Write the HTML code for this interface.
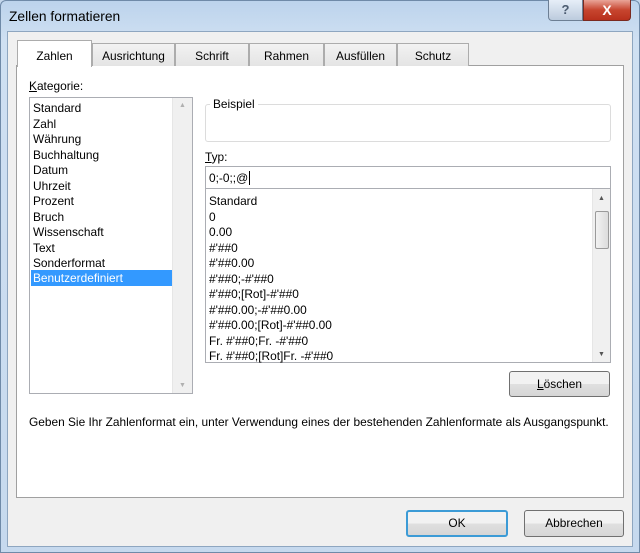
<!DOCTYPE html>
<html><head><meta charset="utf-8"><style>
*{box-sizing:border-box;margin:0;padding:0}
body{width:640px;height:553px;overflow:hidden;background:#c4d7ec;font-family:"Liberation Sans",sans-serif;font-size:11.9px;color:#000;position:relative}
.a{position:absolute}
.frame{left:0;top:0;width:640px;height:553px;background:linear-gradient(#bcd3ec,#cfe0f2 40px,#c6d9ee);border:1px solid #6f8aa8;border-radius:6px 6px 0 0}
.client{left:7px;top:31px;width:626px;height:516px;background:#f0f0f0;border:1px solid #8ea6c0}
.pane{left:16px;top:65px;width:608px;height:433px;background:#fff;border:1px solid #a0a0a0}
.tab{top:43px;height:23px;border:1px solid #acacac;border-bottom:none;background:linear-gradient(#f2f2f2,#e4e4e4);text-align:center;line-height:24px}
.box{background:#fff;border:1px solid #abadb3}
.btn{border:1px solid #707070;border-radius:3px;background:linear-gradient(#f2f2f2 50%,#e0e0e0 50%,#d6d6d6);text-align:center;line-height:24px}
.li{position:absolute;left:3px;white-space:nowrap}
.sb{background:#f0f0f0;border-left:1px solid #e6e6e6}
</style></head><body>
<div class="a frame"></div>
<div class="a" style="left:9px;top:9px;font-size:13.8px;color:#000">Zellen formatieren</div>
<div class="a" style="left:548px;top:0;width:35px;height:21px;border:1px solid #6d7f94;border-top:none;border-radius:0 0 0 4px;background:linear-gradient(#e6eef8,#bccbdd);text-align:center;font-weight:bold;color:#4b5b70;font-size:13px;line-height:20px">?</div>
<div class="a" style="left:583px;top:0;width:48px;height:21px;border:1px solid #7a2a20;border-top:none;border-radius:0 0 4px 0;background:linear-gradient(#e9a598,#c7452f 50%,#b8301c);text-align:center;font-weight:bold;color:#fff;font-size:14px;line-height:20px">X</div>
<div class="a client"></div>
<div class="a pane"></div>
<div class="a tab" style="left:92px;width:83px">Ausrichtung</div>
<div class="a tab" style="left:175px;width:74px">Schrift</div>
<div class="a tab" style="left:249px;width:75px">Rahmen</div>
<div class="a tab" style="left:324px;width:73px">Ausfüllen</div>
<div class="a tab" style="left:397px;width:72px">Schutz</div>
<div class="a tab" style="left:17px;top:40px;width:75px;height:27px;background:#fff;line-height:30px">Zahlen</div>
<div class="a" style="left:29px;top:79px"><u>K</u>ategorie:</div>
<div class="a box" style="left:29px;top:97px;width:164px;height:297px">
 <div class="li" style="top:3px">Standard</div><div class="li" style="top:18.5px">Zahl</div><div class="li" style="top:34px">Währung</div><div class="li" style="top:49.5px">Buchhaltung</div><div class="li" style="top:65px">Datum</div><div class="li" style="top:80.5px">Uhrzeit</div><div class="li" style="top:96px">Prozent</div><div class="li" style="top:111.5px">Bruch</div><div class="li" style="top:127px">Wissenschaft</div><div class="li" style="top:142.5px">Text</div><div class="li" style="top:158px">Sonderformat</div>
 <div class="a" style="left:1px;top:172px;width:141px;height:16px;background:#3399ff;color:#fff;padding-left:2px;line-height:16px">Benutzerdefiniert</div>
 <div class="a sb" style="left:142px;top:0;width:20px;height:295px"><div style="text-align:center;color:#b0b0b0;font-size:7px;margin-top:4px">▲</div><div style="position:absolute;bottom:4px;width:100%;text-align:center;color:#b0b0b0;font-size:7px">▼</div></div>
</div>
<div class="a" style="left:205px;top:104px;width:406px;height:38px;border:1px solid #dcdcdc;border-radius:3px"></div>
<div class="a" style="left:210px;top:97px;background:#fff;padding:0 3px">Beispiel</div>
<div class="a" style="left:205px;top:150px"><u>T</u>yp:</div>
<div class="a box" style="left:205px;top:166px;width:406px;height:23px;padding:4px 3px">0;-0;;@<span style="border-left:1px solid #000;margin-left:1px"></span></div>
<div class="a box" style="left:205px;top:189px;width:406px;height:174px;border-top:none">
 <div class="li" style="top:5px">Standard</div><div class="li" style="top:20.5px">0</div><div class="li" style="top:36px">0.00</div><div class="li" style="top:51.5px">#'##0</div><div class="li" style="top:67px">#'##0.00</div><div class="li" style="top:82.5px">#'##0;-#'##0</div><div class="li" style="top:98px">#'##0;[Rot]-#'##0</div><div class="li" style="top:113.5px">#'##0.00;-#'##0.00</div><div class="li" style="top:129px">#'##0.00;[Rot]-#'##0.00</div><div class="li" style="top:144.5px">Fr. #'##0;Fr. -#'##0</div><div class="li" style="top:160px">Fr. #'##0;[Rot]Fr. -#'##0</div>
 <div class="a sb" style="left:386px;top:0;width:18px;height:173px"><div style="text-align:center;color:#555;font-size:7px;margin-top:6px">▲</div><div style="position:absolute;left:2px;top:22px;width:14px;height:38px;border:1px solid #9a9a9a;border-radius:2px;background:linear-gradient(90deg,#f2f2f2,#dcdcdc)"></div><div style="position:absolute;bottom:4px;width:100%;text-align:center;color:#555;font-size:7px">▼</div></div>
</div>
<div class="a btn" style="left:509px;top:371px;width:101px;height:26px"><u>L</u>öschen</div>
<div class="a" style="left:29px;top:415px">Geben Sie Ihr Zahlenformat ein, unter Verwendung eines der bestehenden Zahlenformate als Ausgangspunkt.</div>
<div class="a btn" style="left:406px;top:510px;width:102px;height:27px;border:2px solid #3c9bd6;line-height:23px">OK</div>
<div class="a btn" style="left:524px;top:510px;width:100px;height:27px">Abbrechen</div>
</body></html>
